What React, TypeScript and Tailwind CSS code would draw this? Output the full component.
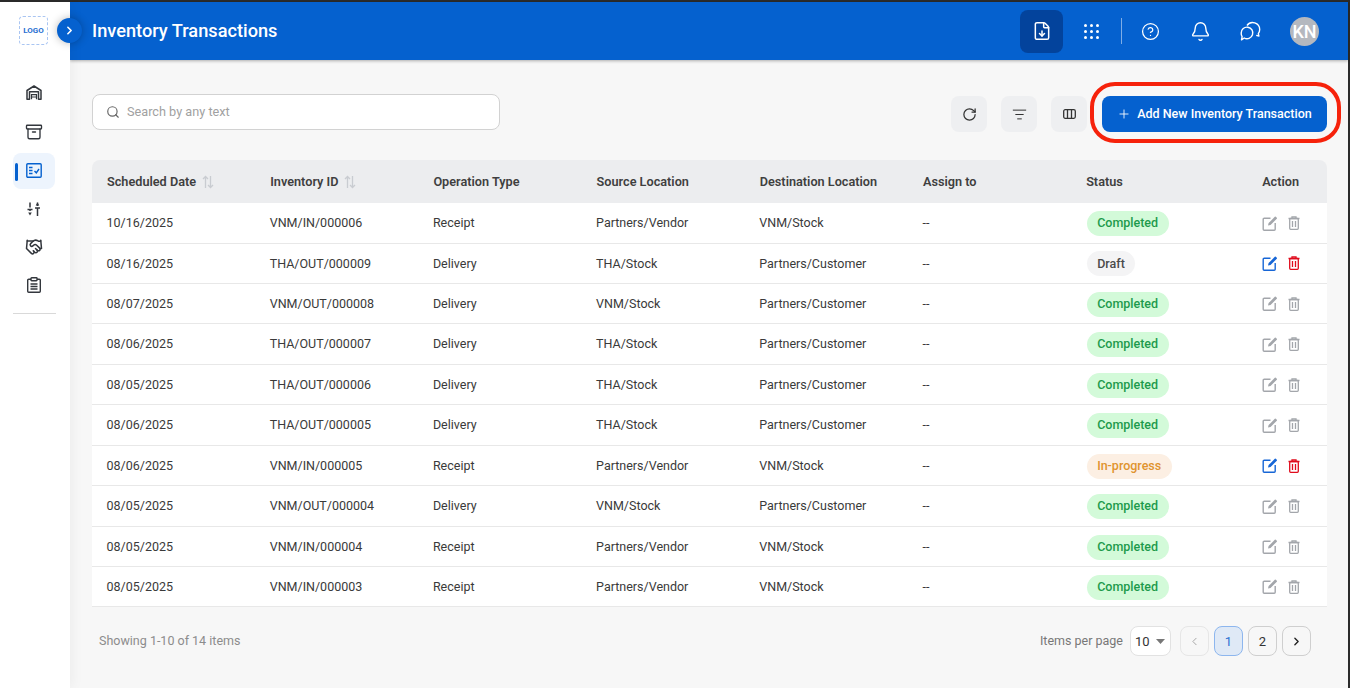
import { Archive, Bell, ChevronLeft, ChevronRight, CircleHelp, FileDown, Handshake, ListFilter, Plus, RotateCw, Search } from "lucide-react";

type Row = {
  date: string;
  id: string;
  type: string;
  source: string;
  dest: string;
  status: "Completed" | "Draft" | "In-progress";
};

const rows: Row[] = [
  { date: "10/16/2025", id: "VNM/IN/000006", type: "Receipt", source: "Partners/Vendor", dest: "VNM/Stock", status: "Completed" },
  { date: "08/16/2025", id: "THA/OUT/000009", type: "Delivery", source: "THA/Stock", dest: "Partners/Customer", status: "Draft" },
  { date: "08/07/2025", id: "VNM/OUT/000008", type: "Delivery", source: "VNM/Stock", dest: "Partners/Customer", status: "Completed" },
  { date: "08/06/2025", id: "THA/OUT/000007", type: "Delivery", source: "THA/Stock", dest: "Partners/Customer", status: "Completed" },
  { date: "08/05/2025", id: "THA/OUT/000006", type: "Delivery", source: "THA/Stock", dest: "Partners/Customer", status: "Completed" },
  { date: "08/06/2025", id: "THA/OUT/000005", type: "Delivery", source: "THA/Stock", dest: "Partners/Customer", status: "Completed" },
  { date: "08/06/2025", id: "VNM/IN/000005", type: "Receipt", source: "Partners/Vendor", dest: "VNM/Stock", status: "In-progress" },
  { date: "08/05/2025", id: "VNM/OUT/000004", type: "Delivery", source: "VNM/Stock", dest: "Partners/Customer", status: "Completed" },
  { date: "08/05/2025", id: "VNM/IN/000004", type: "Receipt", source: "Partners/Vendor", dest: "VNM/Stock", status: "Completed" },
  { date: "08/05/2025", id: "VNM/IN/000003", type: "Receipt", source: "Partners/Vendor", dest: "VNM/Stock", status: "Completed" },
];

const gridCols = "grid grid-cols-[163.2px_163.2px_163.2px_163.2px_163.2px_163.2px_176px_1fr] items-center";

function SortIcon() {
  return (
    <svg width="12" height="14" viewBox="0 0 12 14" fill="none" stroke="#c9ccd1" strokeWidth="1.3" className="ml-1.5">
      <path d="M3.5 13V1.5M1 4l2.5-2.5L6 4" />
      <path d="M8.5 1v11.5M6 10l2.5 2.5L11 10" />
    </svg>
  );
}

function StatusBadge({ status }: { status: Row["status"] }) {
  if (status === "Completed") {
    return <span className="inline-flex h-[25px] items-center rounded-full bg-[#d3fad9] px-[10.5px] font-medium text-[#1d9a4c]">Completed</span>;
  }
  if (status === "Draft") {
    return <span className="inline-flex h-[25px] items-center rounded-full bg-[#f4f4f5] px-[10.5px] font-medium text-[#4b4b4b]">Draft</span>;
  }
  return <span className="inline-flex h-[25px] items-center rounded-full bg-[#fcefe3] px-[10.5px] font-medium text-[#e0942f]">In-progress</span>;
}

function SideIcons() {
  return (
    <div className="mt-[28px] flex flex-col text-[#33373d]">
      <div className="flex h-[39px] w-[42px] items-center justify-center">
        <svg width="16" height="15" viewBox="0 0 16 15" fill="none" stroke="currentColor" strokeWidth="1.5">
          <path d="M1 14.200V5.500L8 1l7 4.500v8.700h-2.500V6.800h-9v7.400z" strokeLinejoin="round" />
          <path d="M5.500 14.200v-4.500h5v4.500M5.500 12h5" strokeWidth="1.200" />
        </svg>
      </div>
      <div className="flex h-[39px] w-[42px] items-center justify-center">
        <Archive size={18} strokeWidth={1.8} />
      </div>
      <div className="relative mt-[1.5px] flex h-[36px] w-[42px] items-center justify-center rounded-lg bg-[#edf4fd]">
        <div className="absolute left-[2px] top-[10px] h-[18px] w-[3px] rounded-full bg-[#0561cf]" />
        <svg width="16" height="15" viewBox="0 0 16 15" fill="none" stroke="#0561cf" strokeWidth="1.4">
          <rect x="0.800" y="0.800" width="14.400" height="13.400" rx="1" />
          <path d="M3 4.500h3.500M3 7.500h3.500M3 10.500h3.500M8.500 8l1.800 1.800L13 6" />
        </svg>
      </div>
      <div className="flex h-[40px] w-[42px] items-center justify-center">
        <svg width="14" height="14" viewBox="0 0 14 14" fill="none" stroke="currentColor" strokeWidth="1.5">
          <path d="M3 0.500v5M0.500 7.500h5M3 7.500v1.500M10.500 14V6.500M8 6h5M10.500 4V0.500" />
          <path d="M3 13.500 1.200 10.500h3.600zM10.500 0.500 12.300 3.500H8.700z" fill="currentColor" stroke="none" />
        </svg>
      </div>
      <div className="flex h-[37px] w-[42px] items-center justify-center">
        <Handshake size={18} strokeWidth={2} />
      </div>
      <div className="flex h-[39px] w-[42px] items-center justify-center">
        <svg width="14" height="16" viewBox="0 0 14 16" fill="none" stroke="currentColor" strokeWidth="1.400">
          <path d="M4 2.200H1.700a1 1 0 0 0-1 1v11a1 1 0 0 0 1 1h10.600a1 1 0 0 0 1-1v-11a1 1 0 0 0-1-1H10" />
          <rect x="4" y="0.700" width="6" height="3" rx="0.600" />
          <path d="M3.500 7h7M3.500 9.500h7M3.500 12h7" />
        </svg>
      </div>
    </div>
  );
}

function EditIcon({ className }: { className: string }) {
  return (
    <svg width="16" height="15" viewBox="0 0 16 15" fill="none" className={className}>
      <path d="M8.500 2.200H2.200a1 1 0 0 0-1 1v10a1 1 0 0 0 1 1h10a1 1 0 0 0 1-1V7" stroke="currentColor" strokeWidth="1.400" />
      <path d="M6 9.600l.6-2.500L12.800.8a.7.700 0 0 1 1 0l1 1a.7.700 0 0 1 0 1L8.500 9z" fill="currentColor" />
    </svg>
  );
}

function TrashIcon({ className }: { className: string }) {
  return (
    <svg width="12" height="14" viewBox="0 0 12 14" fill="none" stroke="currentColor" strokeWidth="1.300" className={className}>
      <path d="M0.500 2.500h11M4 2.300V0.800h4v1.500" />
      <rect x="1.700" y="2.500" width="8.600" height="10.800" rx="1" />
      <path d="M4.500 5v6M7.500 5v6" />
    </svg>
  );
}

function ActionIcons({ active }: { active: boolean }) {
  return (
    <div className="-mt-[1px] flex items-center gap-[10px]">
      <EditIcon className={active ? "text-[#1766d6]" : "text-[#a3a6ab]"} />
      <TrashIcon className={active ? "text-[#e00b1c]" : "text-[#a3a6ab]"} />
    </div>
  );
}

export default function App() {
  return (
    <div className="flex h-screen overflow-hidden bg-[#2b2b2b] pt-[2px] pr-[2px] font-['Roboto',sans-serif] text-[12.5px] text-[#3a3a3a]">
      {/* Sidebar */}
      <aside className="relative z-10 flex w-[70px] shrink-0 flex-col bg-white pl-[13px] shadow-[2px_0_12px_rgba(0,0,0,0.05)]">
        <div className="ml-[6px] mt-[14px] flex h-[29px] w-[29px] items-center justify-center rounded-[4px] border border-dashed border-[#a9c5f2] text-[8px] font-bold text-[#2a70d2]">
          LOGO
        </div>
        <SideIcons />
        <div className="mt-[8px] h-px w-[43px] bg-[#d9d9d9]" />
        <button className="absolute left-[57px] top-[16px] flex h-[25px] w-[25px] items-center justify-center rounded-full bg-[#0561cf] text-white shadow-[0_0_8px_rgba(0,0,0,0.28)]">
          <ChevronRight size={13} strokeWidth={3} />
        </button>
      </aside>

      <div className="flex min-w-0 flex-1 flex-col bg-[#f7f7f7]">
        {/* Header */}
        <header className="flex h-[58px] shrink-0 items-center justify-between bg-[#0561cf] pl-[22px] pr-[29px] shadow-[0_1px_3px_rgba(0,0,0,0.3)]">
          <h1 className="text-[18.2px] font-medium text-white">Inventory Transactions</h1>
          <div className="flex items-center text-white">
            <div className="flex h-[43px] w-[43px] items-center justify-center rounded-lg bg-[#03439c]">
              <FileDown size={20} strokeWidth={1.800} />
            </div>
            <div className="ml-[21px] grid grid-cols-3 gap-[3px]">
              {[0, 1, 2, 3, 4, 5, 6, 7, 8].map((i) => (
                <span key={i} className="h-[3px] w-[3px] rounded-full bg-white" />
              ))}
            </div>
            <div className="ml-[22px] h-[26px] w-px bg-[#7fade6]" />
            <CircleHelp size={19} strokeWidth={1.600} className="ml-[19px]" />
            <Bell size={21} strokeWidth={1.600} className="ml-[30px]" />
            <svg width="21" height="20" viewBox="0 0 21 20" fill="none" stroke="currentColor" strokeWidth="1.400" className="ml-[29px]">
              <path d="M7 4.500a7 7 0 0 1 12.700 4c0 1.600-.5 2.900-1.400 4.100l.6 2.400-2.700-.6" strokeLinejoin="round" />
              <path d="M1.200 12a5.800 5.800 0 1 1 3 5L1.500 18.800l.6-3.200A5.800 5.800 0 0 1 1.200 12z" strokeLinejoin="round" />
            </svg>
            <div className="ml-[29px] flex h-[29px] w-[29px] items-center justify-center rounded-full bg-[#b4b8bf] text-[18px] font-medium text-white">KN</div>
          </div>
        </header>

        <main className="relative flex min-h-0 flex-1 flex-col pl-[22px] pr-[21px]">
          {/* Toolbar */}
          <div className="mt-[34px] flex h-[38px] items-start justify-between">
            <div className="flex h-[36px] w-[408px] items-center gap-[7px] rounded-lg border border-[#d2d2d2] bg-white px-[13px] text-[12.700px] text-[#a1a1a1]">
              <Search size={14} strokeWidth={2} className="text-[#666]" />
              <span>Search by any text</span>
            </div>
            <div className="mt-[2px] flex items-center">
              <button className="flex h-[36px] w-[36px] items-center justify-center rounded-lg bg-[#eeeff1] text-[#333]">
                <RotateCw size={15} strokeWidth={2} />
              </button>
              <button className="ml-[14px] flex h-[36px] w-[36px] items-center justify-center rounded-lg bg-[#eeeff1] text-[#333]">
                <ListFilter size={15} strokeWidth={1.600} />
              </button>
              <button className="ml-[14px] flex h-[36px] w-[36px] items-center justify-center rounded-lg bg-[#eeeff1] text-[#333]">
                <svg width="13" height="10" viewBox="0 0 13 10" fill="none" stroke="currentColor" strokeWidth="1.300">
                  <rect x="0.700" y="0.700" width="11.600" height="8.600" rx="1.500" />
                  <path d="M4.500 1v8M8.500 1v8" />
                </svg>
              </button>
              <button className="ml-[15px] flex h-[36px] w-[225px] items-center justify-center gap-[6px] rounded-lg bg-[#0561cf] font-medium text-white">
                <Plus size={14} strokeWidth={1.500} />
                <span>Add New Inventory Transaction</span>
              </button>
            </div>
          </div>
          {/* Red annotation drawn over the button */}
          <div className="pointer-events-none absolute left-[1020px] top-[22px] h-[61px] w-[251px] rounded-[25px] border-[4px] border-[#f6220b]" />

          {/* Table */}
          <div className="mt-[28px] w-[1235px] overflow-hidden rounded-t-lg">
            <div className={`${gridCols} h-[43.100px] bg-[#ecedef] pl-[15px] text-[12.700px] font-semibold text-[#3f3f3f]`}>
              <div className="flex items-center">Scheduled Date<SortIcon /></div>
              <div className="flex items-center">Inventory ID<SortIcon /></div>
              <div>Operation Type</div>
              <div>Source Location</div>
              <div>Destination Location</div>
              <div>Assign to</div>
              <div>Status</div>
              <div>Action</div>
            </div>
            {rows.map((row) => (
              <div key={row.id} className={`${gridCols} h-[40.440px] border-b border-[#e8e8e8] bg-white pl-[14.500px] pt-[1.400px]`}>
                <div>{row.date}</div>
                <div>{row.id}</div>
                <div>{row.type}</div>
                <div>{row.source}</div>
                <div>{row.dest}</div>
                <div>--</div>
                <div className="ml-px"><StatusBadge status={row.status} /></div>
                <ActionIcons active={row.status !== "Completed"} />
              </div>
            ))}
          </div>

          {/* Pagination */}
          <div className="mt-[19px] flex w-[1235px] items-center justify-between pl-[7px] pr-[16px]">
            <span className="text-[#8c8c8c]">Showing 1-10 of 14 items</span>
            <div className="flex items-center">
              <span className="text-[#777]">Items per page</span>
              <div className="ml-[7px] flex h-[30px] w-[41px] items-center justify-between rounded-lg border border-[#e2e2e2] bg-white pl-[4px] pr-[5px] text-[13px] text-[#333]">
                <span>10</span>
                <svg width="9" height="5" viewBox="0 0 9 5" fill="#777"><path d="M0 0h9L4.500 5z" /></svg>
              </div>
              <div className="ml-[9px] flex h-[30px] w-[29px] items-center justify-center rounded-lg border border-[#e6e6e6] text-[#a5a5a5]">
                <ChevronLeft size={13} strokeWidth={1.800} />
              </div>
              <div className="ml-[5px] flex h-[30px] w-[29px] items-center justify-center rounded-lg border border-[#8db6ee] bg-[#dfe9f6] text-[13px] text-[#2a70d2]">1</div>
              <div className="ml-[5px] flex h-[30px] w-[29px] items-center justify-center rounded-lg border border-[#cfcfcf] text-[13px] text-[#333]">2</div>
              <div className="ml-[5px] flex h-[30px] w-[29px] items-center justify-center rounded-lg border border-[#cfcfcf] text-[#222]">
                <ChevronRight size={13} strokeWidth={2.500} />
              </div>
            </div>
          </div>
        </main>
      </div>
    </div>
  );
}
